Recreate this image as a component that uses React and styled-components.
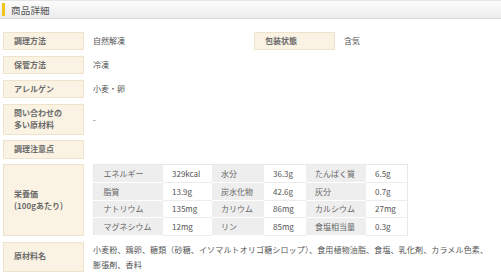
import React from "react";
import styled, { createGlobalStyle } from "styled-components";

const Global = createGlobalStyle`
  html, body { margin: 0; padding: 0; background: #fff; }
  body {
    font-family: "Noto Sans CJK JP", "Noto Sans", sans-serif;
    color: #555;
    -webkit-font-smoothing: antialiased;
  }
`;

const Page = styled.div`
  width: 501px;
  height: 272px;
  overflow: hidden;
  background: #fff;
`;

const Header = styled.div`
  height: 17px;
  display: flex;
  align-items: center;
  gap: 6px;
  padding-left: 2px;
  border-top: 1px solid #e6e6e6;
  border-bottom: 1px solid #d9d9d9;
  background: linear-gradient(#fcfcfc, #ececec);
`;

const Mark = styled.span`
  width: 3px;
  height: 13px;
  background: #f0c419;
`;

const Title = styled.h2`
  margin: 0;
  font-size: 9.5px;
  font-weight: normal;
  color: #555;
  letter-spacing: 0.2px;
`;

const Body = styled.div`
  padding: 12.5px 3px 0;
  display: flex;
  flex-direction: column;
  gap: 5.5px;
`;

const Split = styled.div`
  display: grid;
  grid-template-columns: 251px 1fr;
`;

const Row = styled.div`
  display: flex;
  align-items: stretch;
  gap: 9px;
  min-height: ${(p) => p.$min || 18.5}px;
`;

const Label = styled.div`
  box-sizing: border-box;
  flex: 0 0 81px;
  display: flex;
  align-items: center;
  padding: 2px 10px;
  background: #faf3e3;
  border: 1px solid #efe4cb;
  font-size: 8px;
  line-height: 12.5px;
  font-weight: bold;
  color: #6a6a6a;
`;

const Value = styled.div`
  display: flex;
  align-items: center;
  font-size: 8px;
  line-height: 15px;
  color: #555;
`;

const Materials = styled(Value)`
  padding-right: 6px;
  letter-spacing: 0.15px;
`;

const Table = styled.table`
  border-collapse: collapse;
  width: 314px;
  table-layout: fixed;
  border: 1px solid #e8e8e8;
  font-size: 8px;
`;

const Th = styled.th`
  box-sizing: border-box;
  height: 17.75px;
  padding: 0 0 0 9.5px;
  text-align: left;
  font-weight: normal;
  color: #666;
  background: #eeeeee;
  border-bottom: 1px solid #fff;
`;

const Td = styled.td`
  box-sizing: border-box;
  height: 17.75px;
  padding: 0 0 0 9.5px;
  color: #555;
  background: #fff;
  border-bottom: 1px solid #ececec;
`;

const nutrition = [
  ["エネルギー", "329kcal", "水分", "36.3g", "たんぱく質", "6.5g"],
  ["脂質", "13.9g", "炭水化物", "42.6g", "灰分", "0.7g"],
  ["ナトリウム", "135mg", "カリウム", "86mg", "カルシウム", "27mg"],
  ["マグネシウム", "12mg", "リン", "85mg", "食塩相当量", "0.3g"],
];

const widths = [69, 49, 52, 42, 60, 42];

export default function App() {
  return (
    <Page>
      <Global />
      <Header>
        <Mark />
        <Title>商品詳細</Title>
      </Header>
      <Body>
        <Split>
          <Row>
            <Label>調理方法</Label>
            <Value>自然解凍</Value>
          </Row>
          <Row>
            <Label>包装状態</Label>
            <Value>含気</Value>
          </Row>
        </Split>
        <Row>
          <Label>保管方法</Label>
          <Value>冷凍</Value>
        </Row>
        <Row>
          <Label>アレルゲン</Label>
          <Value>小麦・卵</Value>
        </Row>
        <Row $min={30}>
          <Label>
            問い合わせの
            <br />
            多い原材料
          </Label>
          <Value>-</Value>
        </Row>
        <Row>
          <Label>調理注意点</Label>
          <Value />
        </Row>
        <Row>
          <Label>
            栄養価
            <br />
            (100gあたり)
          </Label>
          <Value>
            <Table>
              <colgroup>
                {widths.map((w, i) => (
                  <col key={i} style={{ width: w }} />
                ))}
              </colgroup>
              <tbody>
                {nutrition.map((r, i) => (
                  <tr key={i}>
                    <Th>{r[0]}</Th>
                    <Td>{r[1]}</Td>
                    <Th>{r[2]}</Th>
                    <Td>{r[3]}</Td>
                    <Th>{r[4]}</Th>
                    <Td>{r[5]}</Td>
                  </tr>
                ))}
              </tbody>
            </Table>
          </Value>
        </Row>
        <Row $min={29.5}>
          <Label>原材料名</Label>
          <Materials>
            小麦粉、鶏卵、糖類（砂糖、イソマルトオリゴ糖シロップ）、食用植物油脂、食塩、乳化剤、カラメル色素、膨張剤、香料
          </Materials>
        </Row>
      </Body>
    </Page>
  );
}
